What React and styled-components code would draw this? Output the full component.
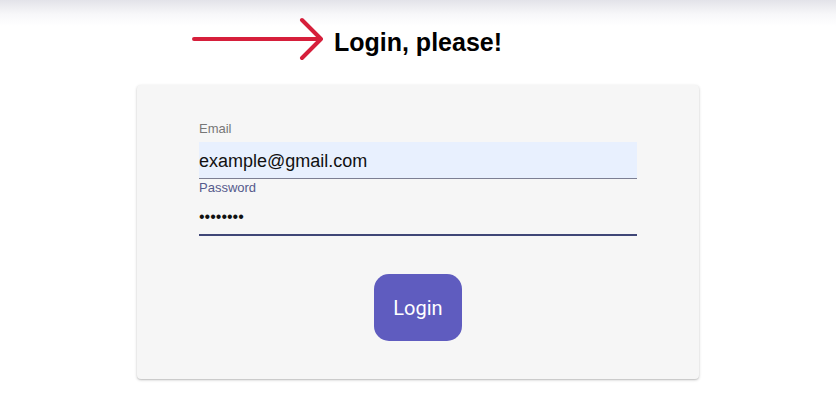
import styled, { createGlobalStyle } from 'styled-components';

const GlobalStyle = createGlobalStyle`
  * { box-sizing: border-box; }
  body {
    margin: 0;
    min-height: 410px;
    font-family: 'Liberation Sans', Arial, sans-serif;
    background: linear-gradient(#e3e3e9 0px, #f7f7f9 14px, #ffffff 26px) no-repeat;
    background-color: #fff;
  }
`;

const Page = styled.div`
  display: flex;
  flex-direction: column;
  align-items: center;
  padding-top: 18px;
`;

const TitleRow = styled.div`
  display: grid;
  grid-template-columns: 1fr auto 1fr;
  align-items: center;
  width: 100%;
  height: 48px;
`;

const Arrow = styled.svg`
  justify-self: end;
  margin-right: 10px;
  margin-top: -6px;
`;

const Title = styled.h1`
  margin: 0;
  font-size: 25px;
  font-weight: 700;
  color: #000;
`;

const Card = styled.form`
  margin-top: 19px;
  width: 562px;
  background: #f6f6f6;
  border-radius: 4px;
  box-shadow: 0 1px 3px rgba(0, 0, 0, 0.22), 0 1px 1px rgba(0, 0, 0, 0.08);
  padding: 37px 62px 38px;
  display: flex;
  flex-direction: column;
`;

const Label = styled.label`
  font-size: 13px;
  line-height: 14px;
  color: ${(p) => (p.focused ? '#555a8c' : '#777')};
  margin-bottom: ${(p) => (p.focused ? '2px' : '6px')};
`;

const Input = styled.input`
  width: 100%;
  height: ${(p) => (p.focused ? '39px' : '37px')};
  border: none;
  border-bottom: ${(p) => (p.focused ? '2px solid #3f4677' : '1px solid #7c7f93')};
  background: ${(p) => (p.filled ? '#e8f0fe' : 'transparent')};
  font-family: 'Liberation Sans', Arial, sans-serif;
  font-size: ${(p) => (p.focused ? '16px' : '18px')};
  color: #111;
  padding: 2px 0 0;
  outline: none;
  margin-bottom: ${(p) => (p.focused ? '0' : '2px')};
`;

const Actions = styled.div`
  display: flex;
  justify-content: center;
  margin-top: 38px;
`;

const Button = styled.button`
  width: 88px;
  height: 67px;
  border: none;
  border-radius: 15px;
  background: #5f5cbf;
  color: #fff;
  font-family: Roboto, 'Liberation Sans', Arial, sans-serif;
  font-size: 20px;
  cursor: pointer;
`;

export default function App() {
  return (
    <Page>
      <GlobalStyle />
      <TitleRow>
        <Arrow width="132" height="44" viewBox="0 0 132 44">
          <path
            d="M2 22 H128 M110 3 L129 22 L110 41"
            stroke="#d61f3b"
            strokeWidth="4"
            strokeLinecap="round"
            strokeLinejoin="round"
            fill="none"
          />
        </Arrow>
        <Title>Login, please!</Title>
        <div />
      </TitleRow>
      <Card onSubmit={(e) => e.preventDefault()}>
        <Label>Email</Label>
        <Input filled defaultValue="example@gmail.com" />
        <Label focused>Password</Label>
        <Input focused type="password" defaultValue="password" />
        <Actions>
          <Button type="submit">Login</Button>
        </Actions>
      </Card>
    </Page>
  );
}
